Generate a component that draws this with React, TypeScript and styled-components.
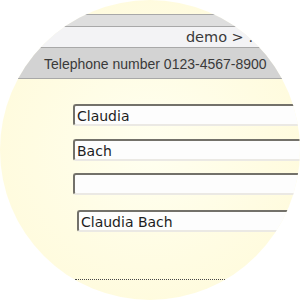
import React from "react";
import styled, { createGlobalStyle } from "styled-components";

const Global = createGlobalStyle`
  html, body { margin: 0; padding: 0; background: #ffffff; }
  body { width: 300px; height: 300px; overflow: hidden; }
`;

const Lens = styled.div`
  width: 300px;
  height: 300px;
  border-radius: 50%;
  overflow: hidden;
  background: radial-gradient(circle at 50% 50%, #fffff0 0%, #fffce2 55%, #fffad8 100%);
  font-family: "DejaVu Sans", Verdana, sans-serif;
  padding-top: 14px;
  box-sizing: border-box;
`;

const Band = styled.div<{ $h: number; $bg: string; $align?: string; $top?: boolean }>`
  height: ${(p) => p.$h}px;
  background: ${(p) => p.$bg};
  border-top: ${(p) => (p.$top ? "1px solid #a8a8a8" : "none")};
  border-bottom: 1px solid #a8a8a8;
  display: flex;
  align-items: center;
  justify-content: ${(p) => p.$align || "flex-start"};
  color: #3a3a3a;
  white-space: nowrap;
`;

const Crumb = styled.span`
  padding-right: 47px;
  font-size: 14.5px;
`;

const Phone = styled.span`
  padding-left: 44px;
  padding-top: 1px;
  font-family: "Liberation Sans", Arial, sans-serif;
  font-size: 14px;
`;

const Form = styled.div`
  padding: 25px 0 0 73px;
  display: flex;
  flex-direction: column;
`;

const Field = styled.div<{ $indent?: number; $gap?: number }>`
  margin-left: ${(p) => p.$indent || 0}px;
  margin-bottom: ${(p) => p.$gap ?? 12}px;
  width: 400px;
  height: 22px;
  box-sizing: border-box;
  border-top: 2px solid #73716a;
  border-left: 2px solid #73716a;
  border-right: 2px solid #ebe9e4;
  border-bottom: 2px solid #ebe9e4;
  border-radius: 3px 0 0 3px;
  background: #fdfdfd;
  font-size: 14px;
  line-height: 20px;
  color: #1e1e1e;
  padding-left: 2px;
  white-space: nowrap;
`;

const Dotted = styled.div`
  margin: 47px 0 0 2px;
  width: 150px;
  border-top: 1px dotted #444;
`;

export default function App() {
  return (
    <>
      <Global />
      <Lens>
        <Band $h={11} $bg="#dedede" $top />
        <Band $h={20} $bg="#f3f3f5" $align="flex-end">
          <Crumb>demo &gt; .</Crumb>
        </Band>
        <Band $h={30} $bg="#d3d3d3">
          <Phone>Telephone number 0123-4567-8900</Phone>
        </Band>
        <Form>
          <Field $gap={13}>Claudia</Field>
          <Field $gap={12}>Bach</Field>
          <Field $gap={15}></Field>
          <Field $indent={4} $gap={0}>Claudia Bach</Field>
          <Dotted />
        </Form>
      </Lens>
    </>
  );
}
